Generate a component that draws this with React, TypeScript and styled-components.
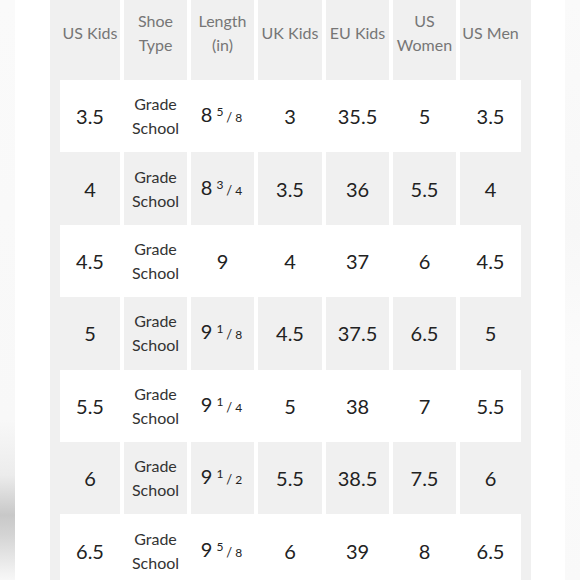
import React from "react";
import styled, { createGlobalStyle } from "styled-components";

const Global = createGlobalStyle`
  html, body { margin: 0; padding: 0; background: #ffffff; }
  body { width: 580px; height: 580px; overflow: hidden; font-family: Lato, "Noto Sans", sans-serif; }
`;

const Page = styled.div`
  display: flex;
  width: 580px;
  height: 580px;
  overflow: hidden;
  background: #ffffff;
`;

const LeftEdge = styled.div`
  width: 15px;
  flex: none;
  background: linear-gradient(
    180deg,
    #fafafa 0px,
    #f8f8f8 420px,
    #ececec 475px,
    #c8c8c8 515px,
    #d4d4d4 535px,
    #f4f4f4 575px,
    #f7f7f7 580px
  );
`;

const RightEdge = styled.div`
  width: 15px;
  flex: none;
  margin-left: auto;
  background: linear-gradient(180deg, #fafafa 0%, #f7f7f7 40%, #fbfbfb 60%, #f9f9f9 100%);
`;

const Panel = styled.div`
  margin-left: 35px;
  width: 461px;
  flex: none;
  padding: 0 10px;
  background: #f0f0f0;
`;

const Grid = styled.div`
  display: grid;
  grid-template-columns: 60px 63px 63px 64px 63px 63px 61px;
  grid-template-rows: 80px;
  grid-auto-rows: 72.4px;
  column-gap: 4px;
  background: #ffffff;
`;

const HeadCell = styled.div`
  box-sizing: border-box;
  padding-bottom: 14px;
  display: flex;
  align-items: center;
  justify-content: center;
  text-align: center;
  background: #f0f0f0;
  color: #767676;
  font-size: 16px;
  line-height: 24px;
  white-space: nowrap;
`;

const Cell = styled.div<{ $shade: boolean }>`
  display: flex;
  align-items: center;
  justify-content: center;
  text-align: center;
  background: ${(p) => (p.$shade ? "#f0f0f0" : "#ffffff")};
  color: #222222;
  font-size: 20px;
  line-height: 24px;
  white-space: nowrap;
`;

const TypeText = styled.span`
  font-size: 16px;
  line-height: 24px;
  color: #333333;
`;

const Frac = styled.span`
  display: inline-flex;
  align-items: baseline;
  font-size: 20px;
  margin-right: 2px;
`;

const Num = styled.span`
  font-size: 12px;
  position: relative;
  top: -6px;
  margin-left: 4px;
`;

const Slash = styled.span`
  font-size: 13px;
  margin: 0 3px;
`;

const Den = styled.span`
  font-size: 12px;
`;

type Row = { us: string; len: [string, string, string] | [string]; uk: string; eu: string; w: string; m: string };

const rows: Row[] = [
  { us: "3.5", len: ["8", "5", "8"], uk: "3", eu: "35.5", w: "5", m: "3.5" },
  { us: "4", len: ["8", "3", "4"], uk: "3.5", eu: "36", w: "5.5", m: "4" },
  { us: "4.5", len: ["9"], uk: "4", eu: "37", w: "6", m: "4.5" },
  { us: "5", len: ["9", "1", "8"], uk: "4.5", eu: "37.5", w: "6.5", m: "5" },
  { us: "5.5", len: ["9", "1", "4"], uk: "5", eu: "38", w: "7", m: "5.5" },
  { us: "6", len: ["9", "1", "2"], uk: "5.5", eu: "38.5", w: "7.5", m: "6" },
  { us: "6.5", len: ["9", "5", "8"], uk: "6", eu: "39", w: "8", m: "6.5" },
];

const headers: React.ReactNode[] = [
  "US Kids",
  <>Shoe<br />Type</>,
  <>Length<br />(in)</>,
  "UK Kids",
  "EU Kids",
  <>US<br />Women</>,
  "US Men",
];

function Length({ v }: { v: Row["len"] }) {
  if (v.length === 1) return <>{v[0]}</>;
  return (
    <Frac>
      {v[0]}
      <Num>{v[1]}</Num>
      <Slash>/</Slash>
      <Den>{v[2]}</Den>
    </Frac>
  );
}

export default function App() {
  return (
    <>
      <Global />
      <Page>
        <LeftEdge />
        <Panel>
          <Grid>
            {headers.map((h, i) => (
              <HeadCell key={i}>{h}</HeadCell>
            ))}
            {rows.map((r, i) => {
              const shade = i % 2 === 1;
              return (
                <React.Fragment key={i}>
                  <Cell $shade={shade}>{r.us}</Cell>
                  <Cell $shade={shade}>
                    <TypeText>Grade<br />School</TypeText>
                  </Cell>
                  <Cell $shade={shade}><Length v={r.len} /></Cell>
                  <Cell $shade={shade}>{r.uk}</Cell>
                  <Cell $shade={shade}>{r.eu}</Cell>
                  <Cell $shade={shade}>{r.w}</Cell>
                  <Cell $shade={shade}>{r.m}</Cell>
                </React.Fragment>
              );
            })}
          </Grid>
        </Panel>
        <RightEdge />
      </Page>
    </>
  );
}
